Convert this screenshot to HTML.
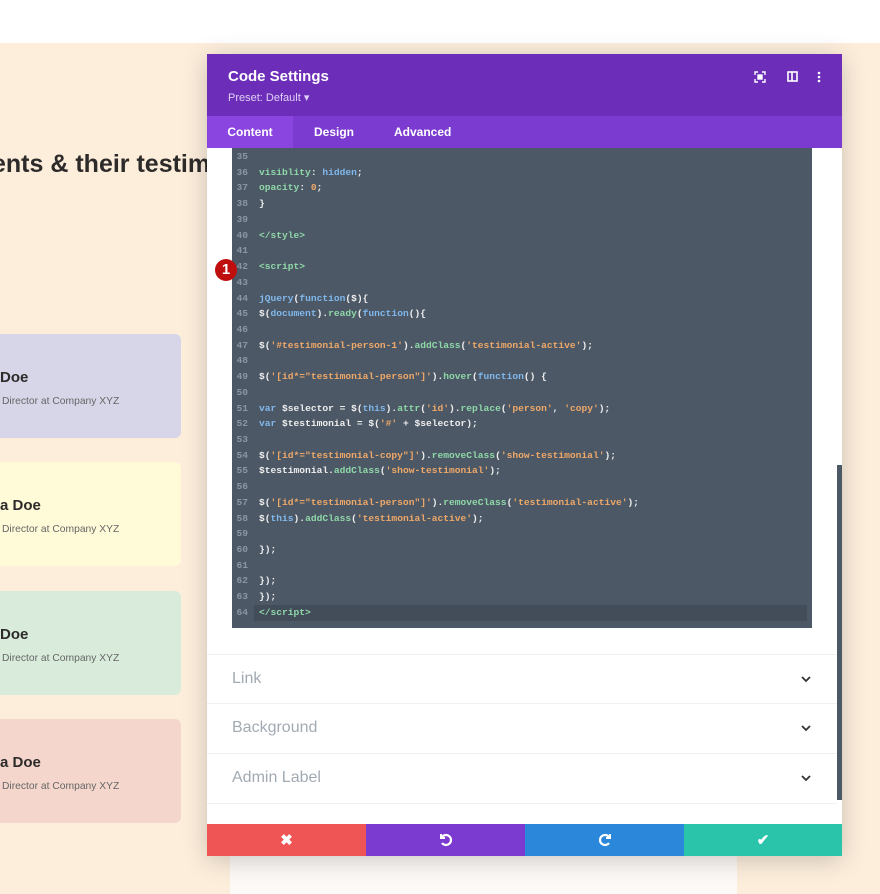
<!DOCTYPE html>
<html><head><style>
body{margin:0;width:880px;height:894px;position:relative;overflow:hidden;background:#fff;font-family:"Liberation Sans",sans-serif}
.bg{position:absolute;left:0;top:43px;width:880px;height:851px;background:#fdeedc}
.h{position:absolute;left:-8px;top:150px;font-size:25px;font-weight:bold;color:#2d2a2a;white-space:nowrap}
.card{position:absolute;left:-10px;width:191px;height:104px;border-radius:6px}
.card b{position:absolute;left:10px;top:35px;font-size:15px;color:#2d2a2a}
.card span{position:absolute;left:12px;top:62px;font-size:10.3px;color:#666}
.modal{position:absolute;left:207px;top:54px;width:635px;height:802px;background:#fff;box-shadow:0 4px 24px rgba(0,0,0,.2)}
.hd{height:62px;background:#6c2eb9;color:#fff;position:relative}
.hd .t{position:absolute;left:21px;top:14px;font-size:15px;font-weight:bold}
.hd .p{position:absolute;left:21px;top:37px;font-size:11px;color:#e0d0f5}
.tabs{height:32px;background:#7b3bd1;color:#fff;font-size:12px;font-weight:bold;position:relative}
.tabs div{position:absolute;top:0;height:32px;line-height:32px}
.code{position:absolute;left:25px;top:94px;width:580px;height:480px;background:#4d5866;font-family:"Liberation Mono",monospace;font-size:9.6px;font-weight:bold;color:#eee}
.ln{position:absolute;left:0;height:15.72px;line-height:15.72px;width:580px;white-space:pre}
.ln i{font-style:normal;color:#8b96a3;position:absolute;left:0;width:16px;text-align:right}
.ln .c{position:absolute;left:27px}
.g{color:#8ed8a8}.b{color:#80b8ec}.o{color:#eea868}
.sec{position:absolute;left:0;width:630px;height:49px;border-top:1px solid #eef0f2;font-size:16px;color:#a2aab3}
.sec span{position:absolute;left:25px;top:15px}
.sec svg{position:absolute;left:594px;top:21px}
.btn{position:absolute;top:770px;height:32px;width:159px;display:flex;align-items:center;justify-content:center;color:#fff;font-size:15px;font-weight:bold}
</style></head><body>
<div class="bg"></div>
<div class="h">ents &amp; their testim</div>
<div class="card" style="top:334px;background:#d7d6e9"><b>Doe</b><span>Director at Company XYZ</span></div>
<div class="card" style="top:462px;background:#fffad8"><b>a Doe</b><span>Director at Company XYZ</span></div>
<div class="card" style="top:591px;background:#d9ebdb"><b>Doe</b><span>Director at Company XYZ</span></div>
<div class="card" style="top:719px;background:#f4d6cc"><b>a Doe</b><span>Director at Company XYZ</span></div>
<div style="position:absolute;left:230px;top:856px;width:507px;height:38px;background:#fdf9f6"></div>
<div class="modal">
<div class="hd"><div class="t">Code Settings</div><div class="p">Preset: Default ▾</div>
<svg style="position:absolute;left:547px;top:17px" width="12" height="12" viewBox="0 0 12 12" fill="none" stroke="#fff" stroke-width="1.4"><path d="M1 4V1h3M8 1h3v3M11 8v3H8M4 11H1V8"/><rect x="4" y="4" width="4" height="4" fill="#fff"/></svg>
<svg style="position:absolute;left:580px;top:17px" width="11" height="11" viewBox="0 0 11 11" fill="none" stroke="#fff" stroke-width="1.6"><rect x="1" y="1" width="9" height="9"/><path d="M5 1v9"/></svg>
<svg style="position:absolute;left:610px;top:17px" width="4" height="12" viewBox="0 0 4 12" fill="#fff"><circle cx="2" cy="2" r="1.3"/><circle cx="2" cy="6" r="1.3"/><circle cx="2" cy="10" r="1.3"/></svg>
</div>
<div class="tabs"><div style="left:0;width:86px;background:#8a45e0;text-align:center">Content</div><div style="left:107px">Design</div><div style="left:187px">Advanced</div></div>
<div class="code">
<div class="ln" style="top:1px"><i>35</i></div>
<div class="ln" style="top:16.7px"><i>36</i><span class="c"><span class="g">visiblity</span>: <span class="b">hidden</span>;</span></div>
<div class="ln" style="top:32.4px"><i>37</i><span class="c"><span class="g">opacity</span>: <span class="o">0</span>;</span></div>
<div class="ln" style="top:48.2px"><i>38</i><span class="c">}</span></div>
<div class="ln" style="top:63.9px"><i>39</i></div>
<div class="ln" style="top:79.6px"><i>40</i><span class="c"><span class="g">&lt;/style&gt;</span></span></div>
<div class="ln" style="top:95.3px"><i>41</i></div>
<div class="ln" style="top:111px"><i>42</i><span class="c"><span class="g">&lt;script&gt;</span></span></div>
<div class="ln" style="top:126.8px"><i>43</i></div>
<div class="ln" style="top:142.5px"><i>44</i><span class="c"><span class="b">jQuery</span>(<span class="b">function</span>($){</span></div>
<div class="ln" style="top:158.2px"><i>45</i><span class="c">$(<span class="b">document</span>).<span class="g">ready</span>(<span class="b">function</span>(){</span></div>
<div class="ln" style="top:173.9px"><i>46</i></div>
<div class="ln" style="top:189.6px"><i>47</i><span class="c">$(<span class="o">'#testimonial-person-1'</span>).<span class="g">addClass</span>(<span class="o">'testimonial-active'</span>);</span></div>
<div class="ln" style="top:205.4px"><i>48</i></div>
<div class="ln" style="top:221.1px"><i>49</i><span class="c">$(<span class="o">'[id*="testimonial-person"]'</span>).<span class="g">hover</span>(<span class="b">function</span>() {</span></div>
<div class="ln" style="top:236.8px"><i>50</i></div>
<div class="ln" style="top:252.5px"><i>51</i><span class="c"><span class="b">var</span> $selector = $(<span class="b">this</span>).<span class="g">attr</span>(<span class="o">'id'</span>).<span class="g">replace</span>(<span class="o">'person'</span>, <span class="o">'copy'</span>);</span></div>
<div class="ln" style="top:268.2px"><i>52</i><span class="c"><span class="b">var</span> $testimonial = $(<span class="o">'#'</span> + $selector);</span></div>
<div class="ln" style="top:284px"><i>53</i></div>
<div class="ln" style="top:299.7px"><i>54</i><span class="c">$(<span class="o">'[id*="testimonial-copy"]'</span>).<span class="g">removeClass</span>(<span class="o">'show-testimonial'</span>);</span></div>
<div class="ln" style="top:315.4px"><i>55</i><span class="c">$testimonial.<span class="g">addClass</span>(<span class="o">'show-testimonial'</span>);</span></div>
<div class="ln" style="top:331.1px"><i>56</i></div>
<div class="ln" style="top:346.8px"><i>57</i><span class="c">$(<span class="o">'[id*="testimonial-person"]'</span>).<span class="g">removeClass</span>(<span class="o">'testimonial-active'</span>);</span></div>
<div class="ln" style="top:362.6px"><i>58</i><span class="c">$(<span class="b">this</span>).<span class="g">addClass</span>(<span class="o">'testimonial-active'</span>);</span></div>
<div class="ln" style="top:378.3px"><i>59</i></div>
<div class="ln" style="top:394px"><i>60</i><span class="c">});</span></div>
<div class="ln" style="top:409.7px"><i>61</i></div>
<div class="ln" style="top:425.4px"><i>62</i><span class="c">});</span></div>
<div class="ln" style="top:441.2px"><i>63</i><span class="c">});</span></div>
<div style="position:absolute;left:22px;top:457px;width:553px;height:16px;background:#434d5a"></div>
<div class="ln" style="top:456.9px"><i>64</i><span class="c"><span class="g">&lt;/script&gt;</span></span></div>
</div>
<div style="position:absolute;left:8px;top:205px;width:22px;height:22px;border-radius:50%;background:#c00d0d;color:#fff;font-size:15px;font-weight:bold;text-align:center;line-height:22px">1</div>
<div style="position:absolute;left:630px;top:411px;width:5px;height:335px;background:#4d5866"></div>
<div class="sec" style="top:600px"><span>Link</span><svg width="10" height="7" viewBox="0 0 10 7"><path d="M1 1l4 4 4-4" fill="none" stroke="#333" stroke-width="1.8"/></svg></div>
<div class="sec" style="top:649px"><span>Background</span><svg width="10" height="7" viewBox="0 0 10 7"><path d="M1 1l4 4 4-4" fill="none" stroke="#333" stroke-width="1.8"/></svg></div>
<div class="sec" style="top:699px;border-bottom:1px solid #eef0f2"><span>Admin Label</span><svg width="10" height="7" viewBox="0 0 10 7"><path d="M1 1l4 4 4-4" fill="none" stroke="#333" stroke-width="1.8"/></svg></div>
<div class="btn" style="left:0;background:#ef5555">✖</div>
<div class="btn" style="left:159px;background:#7b3bd1"><svg width="14" height="14" viewBox="0 0 14 14" fill="none" stroke="#fff" stroke-width="2.2"><path d="M3 4a5 5 0 1 1 0 6"/><path d="M2 1v4h4" stroke-width="2"/></svg></div>
<div class="btn" style="left:318px;background:#2b87da"><svg width="14" height="14" viewBox="0 0 14 14" fill="none" stroke="#fff" stroke-width="2.2"><path d="M11 4a5 5 0 1 0 0 6"/><path d="M12 1v4H8" stroke-width="2"/></svg></div>
<div class="btn" style="left:477px;width:158px;background:#29c4a9">✔</div>
</div>
</body></html>
